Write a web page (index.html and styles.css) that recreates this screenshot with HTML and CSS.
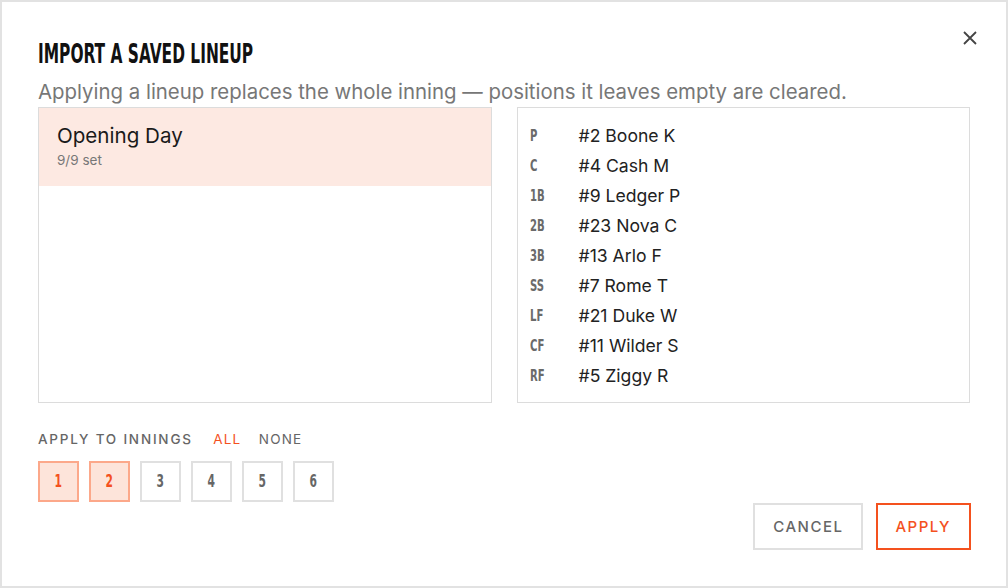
FILE: index.html
```html
<!DOCTYPE html>
<html lang="en">
<head>
  <meta charset="UTF-8" />
  <title>Import a saved lineup</title>
  <link rel="stylesheet" href="styles.css">
</head>
<body>

<div class="dialog">
  <div class="dialog-head">
    <h2><span class="narrow">Import a saved lineup</span></h2>
    <button class="close" aria-label="Close">
      <svg width="16" height="16" viewBox="0 0 16 16"><path d="M2 2L14 14M14 2L2 14" stroke="#444" stroke-width="1.8" fill="none"/></svg>
    </button>
  </div>
  <p class="hint">Applying a lineup replaces the whole inning — positions it leaves empty are cleared.</p>

  <div class="panels">
    <div class="panel saved-list">
      <div class="saved-item selected">
        <div class="saved-name">Opening Day</div>
        <div class="saved-meta">9/9 set</div>
      </div>
    </div>
    <div class="panel preview">
      <div class="row"><span class="pos"><span class="narrow">P</span></span><span class="player">#2 Boone K</span></div>
      <div class="row"><span class="pos"><span class="narrow">C</span></span><span class="player">#4 Cash M</span></div>
      <div class="row"><span class="pos"><span class="narrow">1B</span></span><span class="player">#9 Ledger P</span></div>
      <div class="row"><span class="pos"><span class="narrow">2B</span></span><span class="player">#23 Nova C</span></div>
      <div class="row"><span class="pos"><span class="narrow">3B</span></span><span class="player">#13 Arlo F</span></div>
      <div class="row"><span class="pos"><span class="narrow">SS</span></span><span class="player">#7 Rome T</span></div>
      <div class="row"><span class="pos"><span class="narrow">LF</span></span><span class="player">#21 Duke W</span></div>
      <div class="row"><span class="pos"><span class="narrow">CF</span></span><span class="player">#11 Wilder S</span></div>
      <div class="row"><span class="pos"><span class="narrow">RF</span></span><span class="player">#5 Ziggy R</span></div>
    </div>
  </div>

  <div class="dialog-foot">
    <div class="innings">
      <div class="innings-label">
        Apply to innings
        <a class="link active">All</a>
        <a class="link">None</a>
      </div>
      <div class="inning-buttons">
        <button class="inning on"><span class="narrow">1</span></button>
        <button class="inning on"><span class="narrow">2</span></button>
        <button class="inning"><span class="narrow">3</span></button>
        <button class="inning"><span class="narrow">4</span></button>
        <button class="inning"><span class="narrow">5</span></button>
        <button class="inning"><span class="narrow">6</span></button>
      </div>
    </div>
    <div class="actions">
      <button class="btn">Cancel</button>
      <button class="btn primary">Apply</button>
    </div>
  </div>
</div>

</body>
</html>
```

FILE: styles.css
```css
body {
  margin: 0;
  font-family: Inter, "DejaVu Sans", sans-serif;
  color: #222;
  background: #fff;
}

/* stand-in for a condensed display face */
.narrow {
  display: inline-block;
  font-family: "DejaVu Sans", sans-serif;
  font-weight: bold;
  font-stretch: condensed;
  transform: scaleX(0.7);
  transform-origin: left center;
  white-space: nowrap;
}

.dialog {
  width: 1008px;
  height: 588px;
  box-sizing: border-box;
  border: 2px solid #e2e2e2;
  padding: 28px 36px 36px 36px;
  display: flex;
  flex-direction: column;
}

.dialog-head {
  display: flex;
  justify-content: space-between;
  align-items: flex-start;
}

h2 {
  margin: 9px 0 0;
  font-size: 27px;
  line-height: 30px;
  text-transform: uppercase;
  color: #111;
}

h2 .narrow {
  transform: scaleX(0.635);
}

.close {
  background: none;
  border: none;
  padding: 0;
  margin: 0 -8px 0 0;
  cursor: pointer;
}

.hint {
  margin: 9px 0 1px;
  font-size: 20.4px;
  line-height: 28px;
  color: #777;
}

.panels {
  display: grid;
  grid-template-columns: 1fr 1fr;
  gap: 25px;
  height: 296px;
}

.panel {
  border: 1px solid #dcdcdc;
  min-width: 0;
}

.saved-item {
  padding: 14px 18px 14px;
  height: 50px;
}

.saved-item.selected {
  background: #fde9e2;
}

.saved-name {
  font-size: 20.6px;
  line-height: 28px;
  color: #1a1a1a;
}

.saved-meta {
  font-size: 13.5px;
  color: #777;
  margin-top: 2px;
}

.preview {
  padding: 12px 12px;
}

.row {
  display: flex;
  align-items: center;
  height: 30px;
}

.pos {
  width: 49px;
  font-size: 16px;
  color: #6a6a6a;
}

.player {
  font-size: 17.6px;
  color: #222;
}

.dialog-foot {
  display: flex;
  justify-content: space-between;
  align-items: flex-end;
  margin-top: auto;
}

.innings-label {
  font-size: 13.5px;
  font-weight: 500;
  letter-spacing: 1.8px;
  text-transform: uppercase;
  color: #666;
}

.link {
  margin-left: 12px;
  font-weight: normal;
  letter-spacing: 1.2px;
  cursor: pointer;
}

.link.active {
  margin-left: 15px;
  color: #f4511e;
}

.inning-buttons {
  display: flex;
  gap: 10px;
  margin-top: 14px;
  margin-bottom: 48px;
}

.inning {
  width: 41px;
  height: 41px;
  padding: 0;
  background: #fff;
  border: 2px solid #e0e0e0;
  font-size: 17px;
  color: #666;
  cursor: pointer;
}

.inning .narrow {
  transform-origin: center;
}

.inning.on {
  background: #fde4da;
  border-color: #fca88a;
  color: #f4511e;
}

.actions {
  display: flex;
  gap: 13px;
  margin-right: -1px;
}

.btn {
  height: 47px;
  padding: 0 18px;
  background: #fff;
  border: 2px solid #e0e0e0;
  font-family: Inter, "DejaVu Sans", sans-serif;
  font-size: 15px;
  font-weight: 500;
  letter-spacing: 1.5px;
  text-transform: uppercase;
  color: #666;
  cursor: pointer;
}

.btn.primary {
  border-color: #f4511e;
  color: #f4511e;
  padding: 0 18px 0 17px;
}
```
